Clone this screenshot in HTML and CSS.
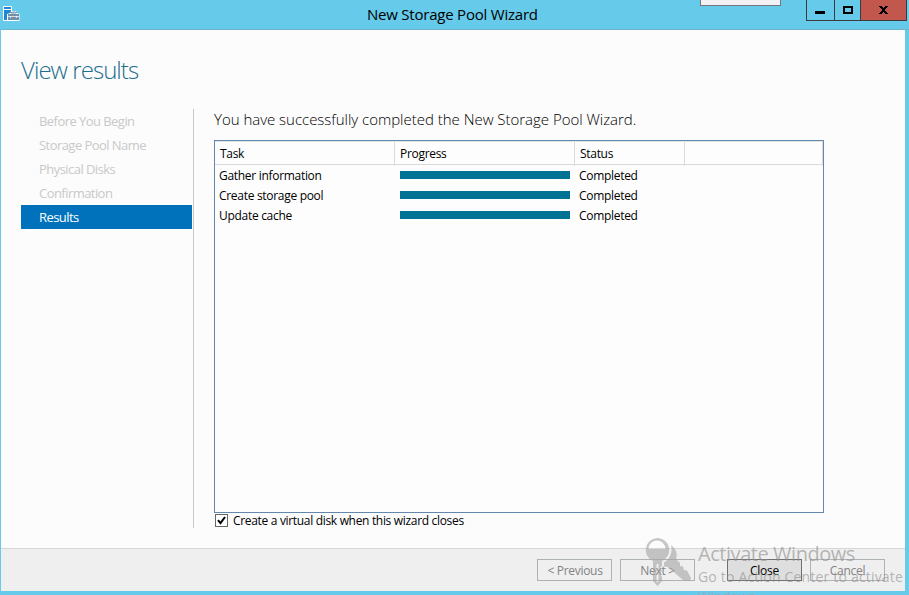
FILE: index.html
```html
<!DOCTYPE html>
<html lang="en">
<head>
<meta charset="utf-8">
<title>New Storage Pool Wizard</title>
<link rel="stylesheet" href="styles.css">
</head>
<body>
<div class="window">
  <header class="titlebar">
    <svg class="app-icon" width="18" height="18" viewBox="0 0 18 18">
      <path d="M1.500 1.500h8v14h-8z" fill="#1e86d2" stroke="#fff"/>
      <path d="M2 4.500h7" stroke="#fff"/>
      <path d="M5 16V9l3-1 1-2h5l1 2 2.500 1v7z" fill="#fff"/>
      <path d="M6 9h11v6H6z" fill="#7191a8"/>
      <path d="M9 8h5M8 7.500h2l.5-.5h3l.5.5h1" stroke="#7191a8" fill="none"/>
      <path d="M6 11.500h11M8.500 11v2M14.500 11v2" stroke="#fff" stroke-width=".7"/>
    </svg>
    <h1 class="title"><span>New Storage Pool Wizard</span></h1>
    <div class="controls">
      <div class="control minimize"><svg width="10" height="3"><path d="M0 0h10v3H0z"/></svg></div>
      <div class="control maximize"><svg width="10" height="8"><path d="M0 0h10v8H0zM2 2v4h6V2z" fill-rule="evenodd"/></svg></div>
      <div class="control close"><svg width="9" height="8" viewBox="0 0 9 8"><path d="M0 0h3v1h1v1h1V1h1V0h3v1H8v1H7v1H6v2h1v1h1v1h1v1H6V7H5V6H4v1H3v1H0V7h1V6h1V5h1V3H2V2H1V1H0z"/></svg></div>
    </div>
    <div class="tab-peek"></div>
  </header>
  <main class="content">
    <h2 class="heading"><span>View results</span></h2>
    <div class="columns">
      <nav class="steps">
        <div class="step">Before You Begin</div>
        <div class="step">Storage Pool Name</div>
        <div class="step">Physical Disks</div>
        <div class="step">Confirmation</div>
        <div class="step current">Results</div>
      </nav>
      <section class="results">
        <p class="message"><span>You have successfully completed the New Storage Pool Wizard.</span></p>
        <div class="list">
          <div class="row head"><div>Task</div><div>Progress</div><div>Status</div><div></div></div>
          <div class="row"><div>Gather information</div><div class="bar"></div><div>Completed</div></div>
          <div class="row"><div>Create storage pool</div><div class="bar"></div><div>Completed</div></div>
          <div class="row"><div>Update cache</div><div class="bar"></div><div>Completed</div></div>
        </div>
        <div class="option">
          <div class="checkbox"><svg width="11" height="11" viewBox="0 0 11 11"><path d="M2 5.200l2.500 3L9 2" fill="none" stroke="#000" stroke-width="2"/></svg></div>
          <span>Create a virtual disk when this wizard closes</span>
        </div>
      </section>
    </div>
  </main>
  <footer class="footer">
    <div class="button previous">&lt; Previous</div>
    <div class="button next">Next &gt;</div>
    <div class="button primary">Close</div>
    <div class="button">Cancel</div>
  </footer>
  <div class="watermark">
    <svg width="50" height="50" viewBox="0 0 50 50" fill="#a4a4a4" fill-opacity=".6">
      <path fill-rule="evenodd" d="M14 0a12 12 0 0 1 5 23v5l-2 2 2 3-2 3 2 3v4l-4.500 5L10 43V23A12 12 0 0 1 14 0zM5.500 11h17a8.500 8.500 0 0 0-17 0zM13.500 26h2v18h-2z"/>
      <path d="M28 7c5 4 7 9 5 14l4 4v3l3 .5 1 3.500 3 .5 4 7.500-1 3-7-1L25 29l-4-.5v-4c6-4 9-10 7-17.500z"/>
    </svg>
    <div class="watermark-text">
      <div class="wm-title"><span>Activate Windows</span></div>
      <div class="wm-line"><span>Go to Action Center to activate</span></div>
      <div class="wm-cut">Windows.</div>
    </div>
  </div>
</div>
</body>
</html>
```
FILE: styles.css
```css
* { box-sizing: border-box; }
body { margin: 0; font: 12px/20px "Open Sans", "Noto Sans", sans-serif; letter-spacing: -0.3px; color: #000; }
h1, h2, p { margin: 0; font-weight: 400; }
.window { position: relative; width: 909px; height: 595px; overflow: hidden; background: #66caea; display: flex; flex-direction: column; padding: 0 4px 4px 1px; white-space: nowrap; }
.titlebar { height: 30px; flex: none; position: relative; border-bottom: 1px solid #6fb2cc; display: flex; margin: 0 -4px 0 0; padding-right: 2px; }
.app-icon { margin: 5px 0 0 1px; flex: none; }
.title { flex: 1; padding-left: 347px; font-size: 15px; line-height: 29px; letter-spacing: -0.22px; }
.controls { display: flex; width: 101px; height: 21px; border: 1px solid #3c3c3c; border-top: 0; }
.control { width: 28px; border-right: 1px solid #3c3c3c; display: flex; justify-content: center; }
.minimize { padding: 11px 2px 0 0; }
.maximize { width: 26px; padding-top: 6px; }
.close { flex: 1; border: 0; background: #c2574d; padding-top: 6px; }
.tab-peek { position: absolute; left: 699px; top: 0; width: 81px; height: 6px; background: #f1f1f6; border: 1px solid #777; border-top: 0; }
.content { flex: 1; background: #fcfcfc; padding: 20px 0 0 20px; }
.heading { font-size: 24px; line-height: 39px; height: 59px; color: #1b6e8c; font-weight: 300; letter-spacing: -0.95px; }
.columns { display: flex; gap: 20px; }
.steps { width: 173px; height: 419px; border-right: 1px solid #c8c8c8; font-size: 13px; line-height: 24px; color: #c9c9c9; letter-spacing: -0.55px; }
.step { height: 24px; width: 171px; padding-left: 18px; }
.current { background: #0072bc; color: #fff; }
.results { width: 610px; }
.message { font-size: 15px; line-height: 20px; height: 31px; font-weight: 300; letter-spacing: -0.02px; }
.list { height: 373px; border: 1px solid #6288ae; background: #fdfdfd; }
.row { display: grid; grid-template-columns: 180px 180px 110px 1fr; height: 20px; padding-left: 4px; }
.head { height: 24px; padding: 0; margin-bottom: 1px; border-bottom: 1px solid #dadada; border-top: 1px solid #e4e4e4; line-height: 24px; }
.head div { border-right: 1px solid #dadada; padding-left: 5px; }
.bar { width: 170px; height: 8px; margin: 5px 0 0 1px; background: #007394; }
.option { display: flex; gap: 5px; padding: 1px 0 0 1px; line-height: 14px; letter-spacing: -0.32px; }
.checkbox { width: 13px; height: 13px; border: 1px solid #666; background: #fff; display: flex; }
.footer { height: 43px; flex: none; background: #efefef; border-top: 1px solid #d6d6d6; display: flex; justify-content: flex-end; gap: 8px; padding: 10px 20px 0 0; }
.button { width: 75px; height: 22px; border: 1px solid #adb2b5; color: #838383; text-align: center; line-height: 22px; }
.previous { padding-left: 1px; }
.next { margin-right: 24px; }
.primary { background: #dedede; border-color: #707070; color: #000; }
.watermark { position: absolute; left: 643px; top: 538px; display: flex; gap: 5px; height: 57px; overflow: hidden; color: rgba(145, 145, 145, .65); }
.wm-title { font-size: 20px; line-height: 32px; height: 30px; letter-spacing: -0.45px; }
.wm-line { font-size: 14px; line-height: 18px; letter-spacing: 0.19px; }
.wm-cut { font-size: 14px; line-height: 22px; height: 9px; color: rgba(180, 150, 155, .5); }
```
